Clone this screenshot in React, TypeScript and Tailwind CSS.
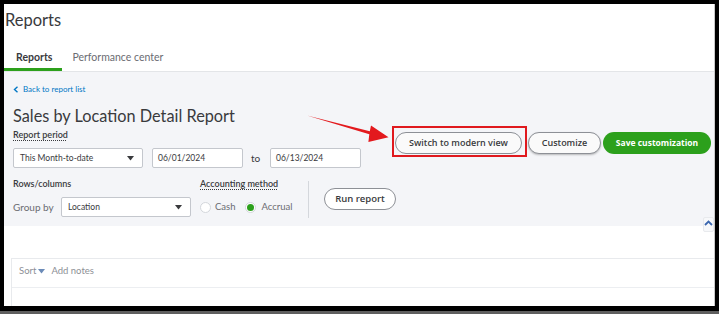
import React from 'react';

const font = "font-['Lato','Open_Sans',sans-serif]";

function Caret() {
    return (
        <svg width="7" height="5" viewBox="0 0 7 5" className="fill-[#393a3d]">
            <path d="M0 0h7L3.5 4.5z" />
        </svg>
    );
}

function SelectBox({ label, width }: { label: string; width: string }) {
    return (
        <div
            className={`${width} h-[20px] bg-white border border-[#c4c7cd] rounded-[2px] flex items-center justify-between pl-[6px] pr-[8px] text-[8.5px] text-[#393a3d]`}
        >
            <span>{label}</span>
            <Caret />
        </div>
    );
}

function DateBox({ value }: { value: string }) {
    return (
        <div className="w-[91px] h-[20px] bg-white border border-[#c4c7cd] rounded-[2px] flex items-center pl-[5px] text-[8.5px] text-[#393a3d]">
            {value}
        </div>
    );
}

export default function App() {
    return (
        <div className={`w-[719px] h-[314px] bg-black relative overflow-hidden ${font}`}>
            <div className="ml-[4px] mt-[4px] w-[711px] h-[302px] bg-white border-r border-[#c9c9c9] flex flex-col relative">
                {/* header */}
                <div className="h-[68px] flex flex-col justify-between border-b border-[#e3e5e8]">
                    <h1 className="pl-[1px] pt-[5px] text-[16.5px] leading-[22px] text-[#393a3d]">
                        Reports
                    </h1>
                    <div className="flex items-end">
                        <div className="h-[24px] pl-[12px] pr-[10px] flex items-center border-b-[3px] border-[#2ca01c] text-[10.5px] font-bold text-[#393a3d]">
                            Reports
                        </div>
                        <div className="h-[24px] px-[10px] flex items-center border-b-[3px] border-transparent text-[10.5px] text-[#6b6c72]">
                            Performance center
                        </div>
                    </div>
                </div>

                {/* report header */}
                <div className="h-[154px] bg-[#f4f5f8] pl-[9px] pr-[3px] pt-[11px]">
                    <a className="flex items-center gap-[4px] h-[12px] text-[8px] text-[#0077c5]">
                        <svg width="6" height="7" viewBox="0 0 6 7" className="stroke-[#0077c5] fill-none">
                            <path d="M4.5 0.8L1.5 3.5l3 2.7" strokeWidth="1.4" />
                        </svg>
                        Back to report list
                    </a>
                    <div className="flex justify-between mt-[10px]">
                        <div className="flex flex-col">
                            <h2 className="text-[16.3px] leading-[22px] text-[#393a3d]">
                                Sales by Location Detail Report
                            </h2>
                            <div className="mt-[2px] h-[12px] leading-[12px] text-[9px] font-semibold text-[#393a3d]">
                                <span className="underline decoration-dotted underline-offset-2">Report period</span>
                            </div>
                            <div className="mt-[7px] flex items-center">
                                <SelectBox label="This Month-to-date" width="w-[130px]" />
                                <div className="ml-[9px]">
                                    <DateBox value="06/01/2024" />
                                </div>
                                <span className="w-[27px] pl-[8px] text-[10px] text-[#393a3d]">to</span>
                                <DateBox value="06/13/2024" />
                            </div>
                        </div>
                        <div className="flex items-end self-start mt-[21px] font-['Open_Sans',sans-serif] text-[9px] font-semibold">
                            <div className="border-2 border-[#e0191e] pl-[1px] pr-[3px] pt-[4px] pb-[1px]">
                                <button className="w-[127px] h-[22px] rounded-full border border-[#8d9096] bg-[#fafafa] text-[#393a3d]">
                                    Switch to modern view
                                </button>
                            </div>
                            <button className="ml-[1px] mb-[3px] w-[73px] h-[22px] rounded-full border border-[#8d9096] bg-[#fafafa] text-[#393a3d] shadow-[0_1px_2px_rgba(0,0,0,0.25)]">
                                Customize
                            </button>
                            <button className="ml-[2px] mb-[3px] w-[108px] h-[22px] rounded-full bg-[#2ca01c] text-white text-[8.5px] font-bold">
                                Save customization
                            </button>
                        </div>
                    </div>
                    <div className="mt-[10px] flex items-start">
                        <div className="w-[187px] flex flex-col">
                            <div className="h-[12px] leading-[12px] text-[9px] font-semibold text-[#393a3d]">
                                Rows/columns
                            </div>
                            <div className="mt-[7px] flex items-center">
                                <span className="w-[48px] text-[10px] text-[#6b6c72]">Group by</span>
                                <SelectBox label="Location" width="w-[130px]" />
                            </div>
                        </div>
                        <div className="w-[108px] flex flex-col">
                            <div className="h-[12px] leading-[12px] text-[9px] font-semibold text-[#393a3d]">
                                <span className="underline decoration-dotted underline-offset-2">
                                    Accounting method
                                </span>
                            </div>
                            <div className="mt-[7px] h-[20px] flex items-center text-[9.5px] text-[#6b6c72]">
                                <span className="w-[11px] h-[11px] rounded-full bg-white border border-[#d4d7dc]" />
                                <span className="ml-[4px]">Cash</span>
                                <span className="ml-[10px] w-[11px] h-[11px] rounded-full bg-white border border-[#d4d7dc] flex items-center justify-center">
                                    <span className="w-[7px] h-[7px] rounded-full bg-[#2ca01c]" />
                                </span>
                                <span className="ml-[5px]">Accrual</span>
                            </div>
                        </div>
                        <div className="w-px h-[37px] bg-[#d4d7dc] mt-[3px]" />
                        <button className="ml-[15px] mt-[10px] w-[72px] h-[22px] rounded-full border border-[#8d9096] bg-white text-[9.5px] font-semibold text-[#393a3d] font-['Open_Sans',sans-serif]">
                            Run report
                        </button>
                    </div>
                </div>

                {/* report body */}
                <div className="flex-1 bg-white pl-[7px] pt-[32px]">
                    <div className="border-t border-l border-[#e8eaed] h-full">
                        <div className="h-[29px] flex items-center pb-[3px] pl-[7px] gap-[6px] border-b border-[#eceef1] text-[9.5px] text-[#8d9096]">
                            <span className="flex items-center gap-[2px]">
                                Sort
                                <svg width="7" height="5" viewBox="0 0 7 5" className="fill-[#6b8bb8]">
                                    <path d="M0 0h7L3.5 4.5z" />
                                </svg>
                            </span>
                            <span>Add notes</span>
                        </div>
                    </div>
                </div>

                {/* scroll-to-top */}
                <div className="absolute left-[699px] top-[213px] w-[11px] h-[15px] bg-[#f7f8fa] border border-[#e8eaed] rounded-[2px] flex items-start justify-center pt-[2px]">
                    <svg width="9" height="6" viewBox="0 0 9 6" className="stroke-[#3d68b0] fill-none">
                        <path d="M1 5L4.5 1.5 8 5" strokeWidth="1.8" />
                    </svg>
                </div>
            </div>
            <div className="mt-[5px] h-[3px] bg-[#5f5f5f]" />

            {/* annotation arrow */}
            <svg className="absolute left-0 top-0" width="719" height="314" viewBox="0 0 719 314">
                <polygon
                    points="307,115.5 369.8,131.2 371,125.4 388.5,137.2 368.4,142 369.3,134.2"
                    fill="#e3191d"
                />
            </svg>
        </div>
    );
}
